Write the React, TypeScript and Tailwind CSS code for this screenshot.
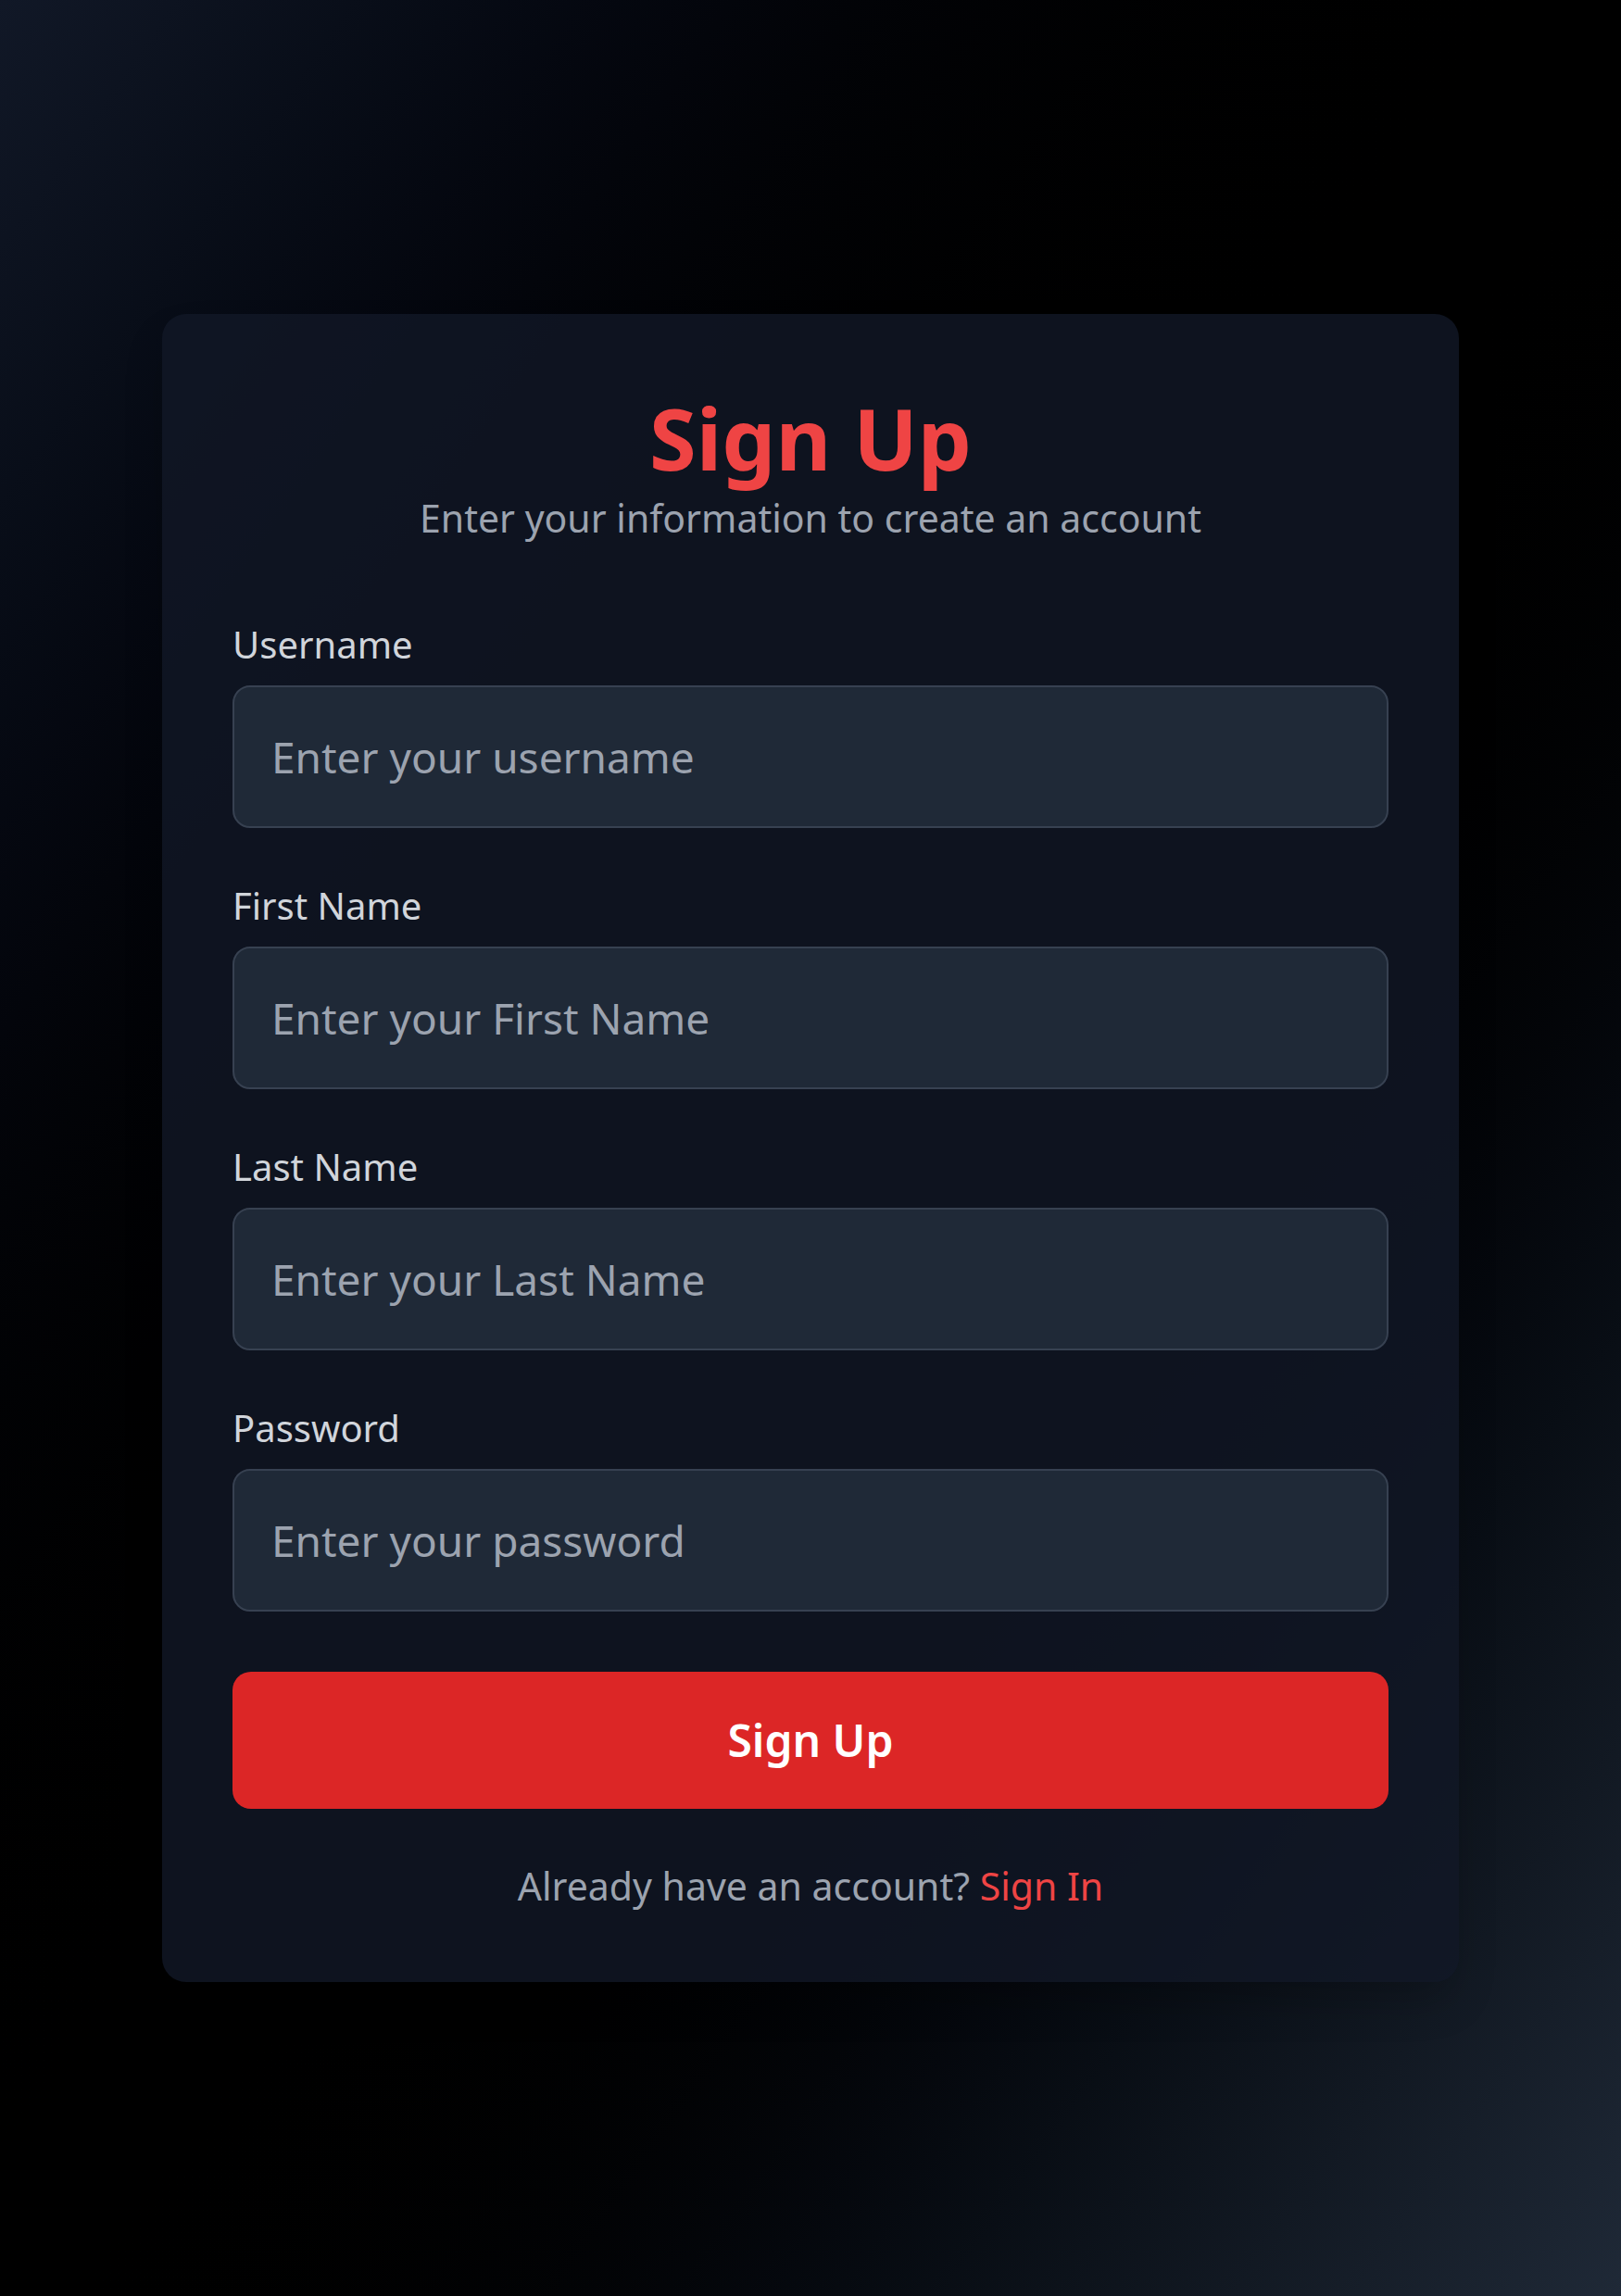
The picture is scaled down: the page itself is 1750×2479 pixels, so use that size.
export default function App() {
  const fields = [
    { label: 'Username', placeholder: 'Enter your username', type: 'text' },
    { label: 'First Name', placeholder: 'Enter your First Name', type: 'text' },
    { label: 'Last Name', placeholder: 'Enter your Last Name', type: 'text' },
    { label: 'Password', placeholder: 'Enter your password', type: 'password' },
  ];

  return (
    <div className="min-h-screen w-full flex items-center justify-center bg-gradient-to-br from-[#111827] via-black to-[#1f2937] font-['Noto_Sans',sans-serif]">
      <div className="w-[1400px] rounded-[26px] bg-[#111827]/80 shadow-2xl px-[76px] pt-[86px] pb-[80px]">
        {/* Header */}
        <div className="text-center">
          <h1 className="text-[92px] leading-[96px] font-bold text-[#ef4444]">Sign Up</h1>
          <p className="mt-[16px] text-[41px] leading-[44px] text-[#9ca3af]">
            Enter your information to create an account
          </p>
        </div>

        {/* Form */}
        <form className="mt-[91px]" onSubmit={(e) => e.preventDefault()}>
          <div className="flex flex-col gap-[60px]">
            {fields.map((field) => (
              <div key={field.label}>
                <label className="block mb-[20px] text-[40px] leading-[48px] text-[#d1d5db]">{field.label}</label>
                <input
                  type={field.type}
                  placeholder={field.placeholder}
                  className="w-full h-[154px] rounded-[19px] border-2 border-[#374151] bg-[#1f2937] px-[40px] text-[46px] text-white placeholder:text-[#9ca3af] outline-none"
                />
              </div>
            ))}
          </div>

          <button
            type="submit"
            className="mt-[65px] w-full h-[148px] rounded-[20px] bg-[#dc2626] text-[48px] font-semibold text-white"
          >
            Sign Up
          </button>
        </form>

        <p className="mt-[59px] text-center text-[41px] leading-[48px] text-[#9ca3af]">
          Already have an account? <span className="text-[#ef4444]">Sign In</span>
        </p>
      </div>
    </div>
  );
}
